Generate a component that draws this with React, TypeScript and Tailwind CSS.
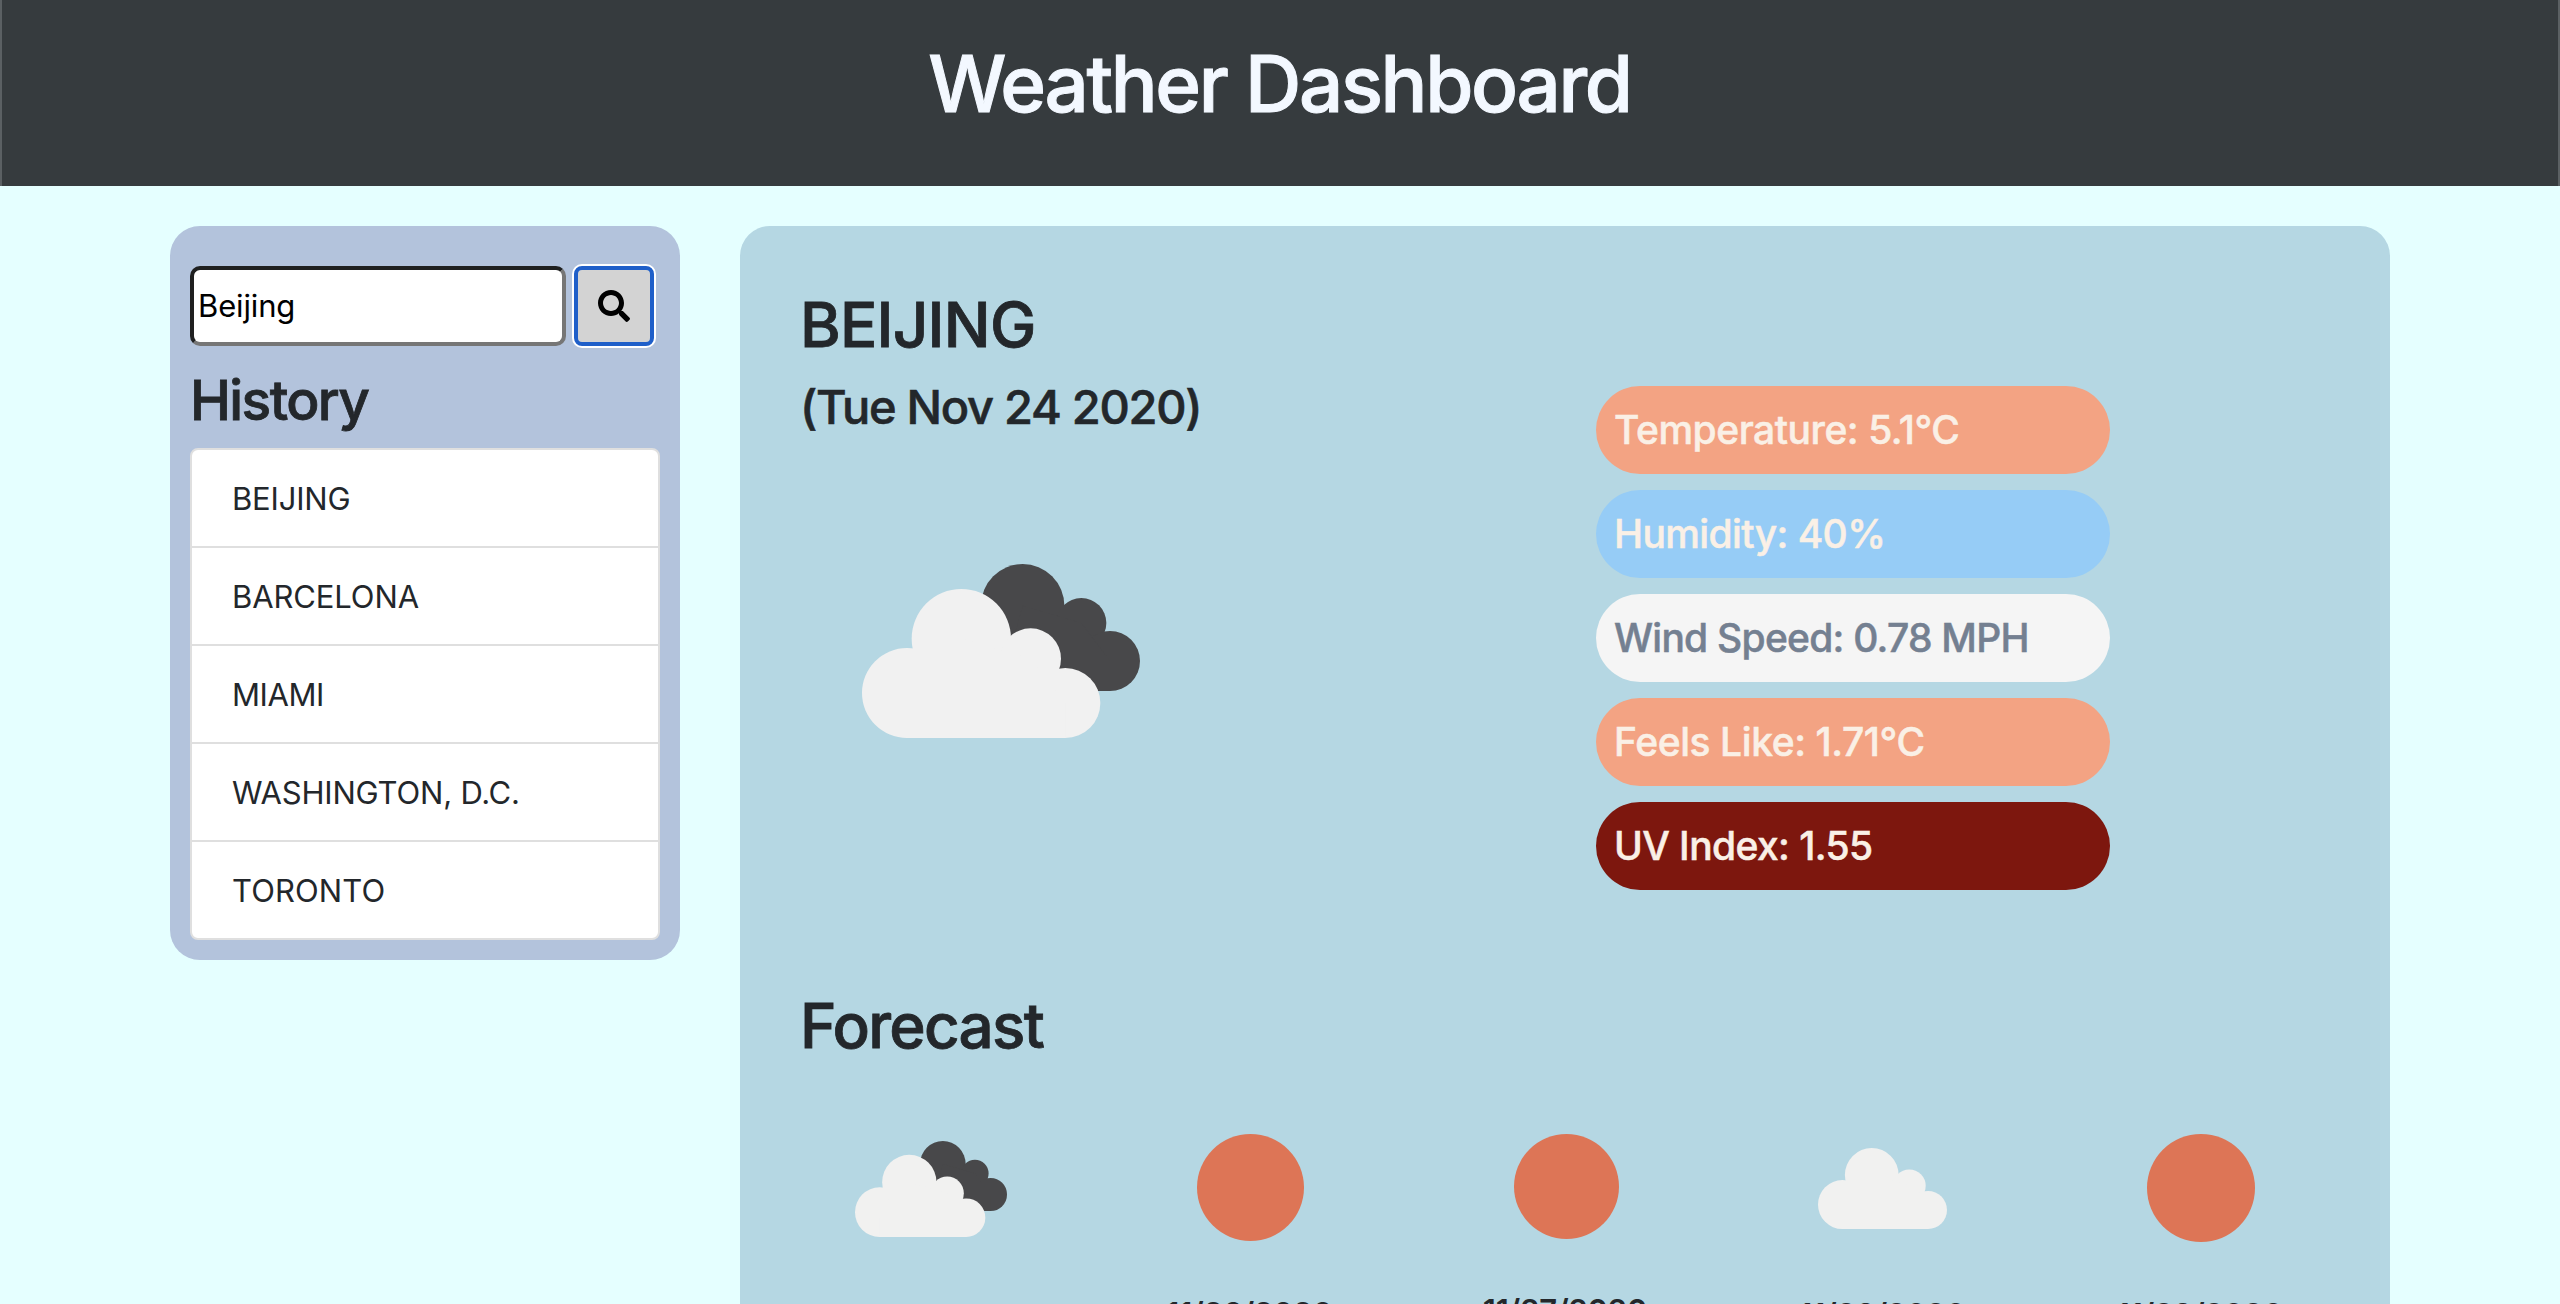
import { FaSearch } from "react-icons/fa";

const history = [
  { name: "BEIJING", tracking: "tracking-[-0.2px]" },
  { name: "BARCELONA", tracking: "tracking-[-0.12px]" },
  { name: "MIAMI", tracking: "tracking-[-0.4px]" },
  { name: "WASHINGTON, D.C.", tracking: "tracking-[-0.2px]" },
  { name: "TORONTO", tracking: "tracking-[0.1px]" },
];

const stats = [
  { text: "Temperature: 5.1°C", style: "bg-[#f3a383] text-[#faf0e6] tracking-[-0.47px]" },
  { text: "Humidity: 40%", style: "bg-[#96ccf6] text-[#faf0e6] tracking-[-0.6px]" },
  { text: "Wind Speed: 0.78 MPH", style: "bg-[#f5f5f5] text-[#748091] tracking-[-0.76px]" },
  { text: "Feels Like: 1.71°C", style: "bg-[#f3a383] text-[#faf0e6] tracking-[-0.42px]" },
  { text: "UV Index: 1.55", style: "bg-[#7d170e] text-[#faf0e6] tracking-[-0.6px]" },
];

function WhiteCloud({ fill }: { fill: string }) {
  return (
    <g fill={fill}>
      <circle cx="261" cy="489" r="135" />
      <circle cx="424" cy="326" r="149" />
      <circle cx="632" cy="386" r="91" />
      <circle cx="736" cy="519" r="105" />
      <path d="M261 624H736V519L632 386 424 326 261 489Z" />
    </g>
  );
}

function BrokenClouds({ className, fill = "#f1f1f1" }: { className: string; fill?: string }) {
  return (
    <svg className={className} viewBox="126 102 834 522" preserveAspectRatio="none">
      <g fill="#48484a">
        <circle cx="608" cy="227" r="125" />
        <circle cx="784" cy="279" r="75" />
        <circle cx="870" cy="393" r="90" />
        <path d="M608 227L784 279 870 393V483H700L560 400Z" />
      </g>
      <WhiteCloud fill={fill} />
    </svg>
  );
}

function Cloud({ className }: { className: string }) {
  return (
    <svg className={className} viewBox="126 177 715 447" preserveAspectRatio="none">
      <WhiteCloud fill="#f1f1f0" />
    </svg>
  );
}

function Sun({ className }: { className: string }) {
  return (
    <svg className={className} viewBox="0 0 100 100" preserveAspectRatio="none">
      <circle cx="50" cy="50" r="50" fill="#dd7556" />
    </svg>
  );
}

const forecast = [
  { icon: <BrokenClouds className="mt-[17px] mr-[5px] h-[96px] w-[152px]" fill="#f1f1f0" />, date: "", offset: "" },
  { icon: <Sun className="mt-[9.5px] size-[107px]" />, date: "11/26/2020", offset: "mt-[2.5px] mr-[2px]" },
  { icon: <Sun className="mt-[9.5px] mr-[2px] size-[105px]" />, date: "11/27/2020", offset: "mr-[5px]" },
  { icon: <Cloud className="mt-[23.5px] mr-[4px] h-[81px] w-[129px]" />, date: "11/28/2020", offset: "mt-[4px] mr-[4px]" },
  { icon: <Sun className="mt-[10px] mr-px size-[108px]" />, date: "11/29/2020", offset: "mt-[4px] mr-[3px]" },
];

export default function App() {
  return (
    <div className="flex h-[1304px] w-full flex-col overflow-hidden bg-[#e5ffff] font-['Inter',sans-serif] text-[#23272b]">
      <header className="h-[186px] shrink-0 border-x-2 border-[#5b6063] bg-[#363b3e] pt-[44px]">
        <h1 className="-ml-px text-center text-[78px] leading-[80px] font-medium tracking-[-2.35px] text-[#f3f8ff] [-webkit-text-stroke:1px]">
          Weather Dashboard
        </h1>
      </header>

      <main className="mt-[40px] flex items-start gap-[60px] pl-[170px]">
        <aside className="h-[734px] w-[510px] shrink-0 rounded-[30px] bg-[#b3c3dc] px-[20px] pt-[40px]">
          <div className="flex gap-2">
            <div className="flex h-[80px] w-[376px] items-center rounded-[10px] border-4 border-t-[#1f2020] border-r-[#767676] border-b-[#767676] border-l-[#1f2020] bg-white pt-px pl-[4px] text-[31px] tracking-[-0.15px] text-black">
              Beijing
            </div>
            <button
              aria-label="Search"
              className="flex size-[80px] items-center justify-center rounded-[8px] border-4 border-[#1f5fc9] bg-[#d3d3d3] text-black ring-2 ring-white"
            >
              <FaSearch className="size-8" />
            </button>
          </div>
          <h2 className="mt-[22px] text-[55px] leading-[64px] font-medium tracking-[-1.6px] [-webkit-text-stroke:0.8px]">
            History
          </h2>
          <ul className="mt-4 w-[470px] divide-y-2 divide-[#dfdfdf] rounded-[8px] border-2 border-[#dfdfdf] bg-white">
            {history.map((city) => (
              <li key={city.name} className="h-[98px] pl-[40px] text-[31px] leading-[98px] last:h-[96px]">
                <span className={city.tracking}>{city.name}</span>
              </li>
            ))}
          </ul>
        </aside>

        <section className="h-[1200px] w-[1650px] shrink-0 rounded-[30px] bg-[#b5d7e3] pt-[61px]">
          <div className="flex h-[701px] pl-[60px]">
            <div className="w-[796px]">
              <h2 className="text-[62px] leading-[76px] font-medium tracking-[-0.76px] [-webkit-text-stroke:0.8px]">
                BEIJING
              </h2>
              <h3 className="mt-[15px] text-[47px] leading-[58px] font-medium tracking-[-1.28px] [-webkit-text-stroke:0.6px]">
                (Tue Nov 24 2020)
              </h3>
              <BrokenClouds className="mt-[128px] ml-[62px] h-[174px] w-[278px]" />
            </div>
            <div className="flex w-[514px] flex-col gap-4 pt-[99px]">
              {stats.map((s) => (
                <p
                  key={s.text}
                  className={`h-[88px] shrink-0 rounded-full pl-[18px] text-[39px] leading-[88px] font-medium [-webkit-text-stroke:0.5px] ${s.style}`}
                >
                  {s.text}
                </p>
              ))}
            </div>
          </div>

          <h2 className="pl-[60px] text-[62px] leading-[76px] font-medium tracking-[-1.75px] [-webkit-text-stroke:0.8px]">
            Forecast
          </h2>
          <div className="mt-[60px] grid grid-cols-[repeat(5,317px)] pl-[35px]">
            {forecast.map((day, i) => (
              <div key={i} className="flex flex-col items-center">
                <div className="h-[168px]">{day.icon}</div>
                <p className={`text-[31px] leading-[38px] font-semibold tracking-[-0.2px] ${day.offset}`}>{day.date}</p>
              </div>
            ))}
          </div>
        </section>
      </main>
    </div>
  );
}
